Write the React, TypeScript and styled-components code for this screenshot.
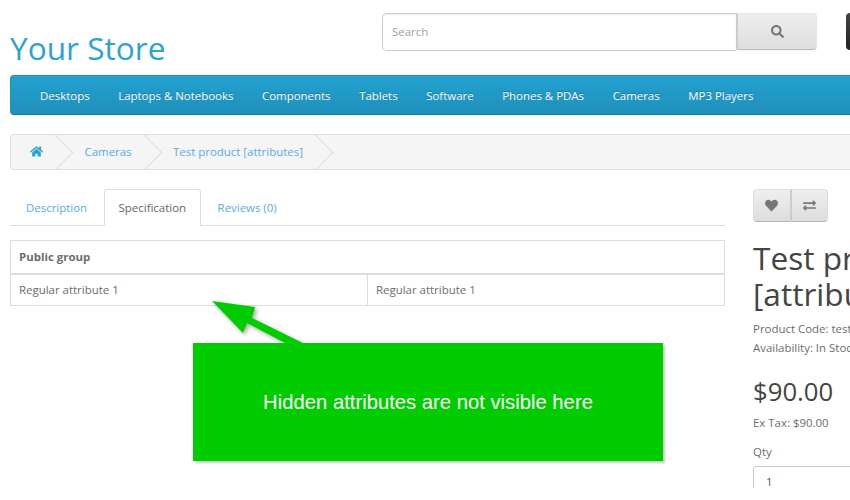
import React from "react";
import styled, { createGlobalStyle } from "styled-components";
import { FaHome, FaSearch, FaHeart, FaExchangeAlt, FaShoppingCart } from "react-icons/fa";

const Global = createGlobalStyle`
  html, body { margin: 0; padding: 0; background: #fff; overflow: hidden; }
  body { font-family: "Open Sans", sans-serif; font-size: 11.45px; line-height: 20px; color: #6c6c6c; }
  * { box-sizing: border-box; }
`;

const Viewport = styled.div`
  position: relative;
  width: 850px;
  height: 488px;
  overflow: hidden;
`;
const Page = styled.div`
  width: 1190px;
  padding: 0 10px;
`;
const Header = styled.header`
  display: flex;
  height: 75px;
`;
const Logo = styled.div`
  width: 372px;
  padding-top: 28px;
  font-size: 31.6px;
  line-height: 40px;
  color: #2aa3d3;
`;
const SearchGroup = styled.div`
  display: flex;
  width: 435px;
  height: 38px;
  margin-top: 13px;
`;
const SearchInput = styled.div`
  flex: 1;
  height: 38px;
  padding: 0 9px;
  border: 1px solid #ccc;
  border-right: 0;
  border-radius: 5px 0 0 5px;
  box-shadow: inset 0 1px 1px rgba(0, 0, 0, 0.075);
  line-height: 35px;
  color: #a0a0a0;
  background: #fff;
`;
const SearchButton = styled.div`
  display: flex;
  align-items: center;
  justify-content: center;
  width: 81px;
  height: 37px;
  border: 1px solid #e6e6e6;
  border-bottom-color: #bbb;
  border-left: 2px solid #ccc;
  border-radius: 0 4px 4px 0;
  background: linear-gradient(#eeeeee, #dddddd);
  box-shadow: 0 1px 2px rgba(0, 0, 0, 0.05);
  color: #777;
  font-size: 13px;
`;
const CartButton = styled.div`
  display: flex;
  align-items: center;
  gap: 8px;
  height: 37px;
  margin: 13px 0 0 29px;
  padding: 0 16px;
  border-radius: 4px;
  background: linear-gradient(#444, #222);
  color: #fff;
  white-space: nowrap;
`;
const Menu = styled.nav`
  display: flex;
  align-items: center;
  height: 40px;
  padding: 2px 0 0 19px;
  border: 1px solid #1f90bb;
  border-bottom-color: #1a7a9f;
  border-right: 0;
  border-radius: 4px;
  background: linear-gradient(#23a1d1, #1f90bb);
`;
const MenuItem = styled.a`
  padding: 0 10px;
  margin-right: 8.6px;
  color: #fff;
  text-shadow: 0 -1px 0 rgba(0, 0, 0, 0.25);
`;
const Crumbs = styled.ul`
  display: flex;
  height: 36px;
  margin: 19px 0 19px;
  padding: 0;
  list-style: none;
  border: 1px solid #ddd;
  border-radius: 4px;
  background: #f5f5f5;
  overflow: hidden;
`;
const Crumb = styled.li`
  position: relative;
  display: flex;
  align-items: center;
  margin-right: 1.5px;
  padding: 0 20px;
  white-space: nowrap;
  &:first-child {
    padding-left: 19px;
  }
  &::after {
    content: "";
    position: absolute;
    top: 4px;
    right: -5px;
    width: 26px;
    height: 26px;
    border-right: 1px solid #ddd;
    border-bottom: 1px solid #ddd;
    transform: rotate(-45deg);
  }
`;
const CrumbLink = styled.a`
  color: #55aedb;
`;
const HomeLink = styled.a`
  display: flex;
  color: #2a9fd4;
  font-size: 13px;
  margin-top: -2px;
`;
const Row = styled.div`
  display: flex;
  align-items: flex-start;
`;
const Main = styled.main`
  width: 715px;
  margin-right: 28px;
`;
const Tabs = styled.ul`
  display: flex;
  height: 37px;
  margin: 0 0 14px;
  padding: 0 0 0 1px;
  list-style: none;
  border-bottom: 1px solid #ddd;
`;
const Tab = styled.li<{ $active?: boolean }>`
  height: ${(p) => (p.$active ? "37px" : "36px")};
  margin-right: 1.5px;
  padding: 8px 14px 0;
  border: 1px solid ${(p) => (p.$active ? "#ddd" : "transparent")};
  border-bottom: ${(p) => (p.$active ? "0" : "1px solid transparent")};
  border-radius: 3px 3px 0 0;
  background: #fff;
  color: ${(p) => (p.$active ? "#666" : "#55aedb")};
`;
const SpecTable = styled.div`
  border: 1px solid #ddd;
`;
const SpecHead = styled.div`
  height: 34px;
  padding: 6px 8px 0;
  border-bottom: 2px solid #ddd;
  font-weight: 700;
`;
const SpecRow = styled.div`
  display: grid;
  grid-template-columns: 356px 1fr;
  height: 30px;
`;
const SpecCell = styled.div`
  padding: 5px 8px 0;
  & + & {
    border-left: 1px solid #ddd;
  }
`;
const Side = styled.aside`
  width: 330px;
  flex: none;
`;
const BtnGroup = styled.div`
  display: flex;
  width: 75px;
  height: 33px;
  margin-bottom: 18px;
`;
const IconBtn = styled.div`
  display: flex;
  align-items: center;
  justify-content: center;
  flex: 1;
  border: 1px solid #ddd;
  border-bottom-color: #b3b3b3;
  background: linear-gradient(#eeeeee, #dddddd);
  color: #777;
  font-size: 13px;
  &:first-child {
    border-right: 0;
    border-radius: 4px 0 0 4px;
  }
  &:last-child {
    border-left: 2px solid #ccc;
    border-radius: 0 4px 4px 0;
  }
`;
const Title = styled.h1`
  margin: 0 0 7px;
  font-size: 31.6px;
  font-weight: 400;
  line-height: 36px;
  color: #444;
`;
const InfoList = styled.ul`
  margin: 0 0 17px;
  padding: 0;
  list-style: none;
  line-height: 19px;
`;
const Price = styled.h2`
  margin: 0 0 3px;
  font-size: 25.7px;
  font-weight: 400;
  line-height: 36px;
  color: #444;
`;
const Tax = styled.div`
  margin-bottom: 9px;
`;
const Label = styled.div`
  margin-bottom: 4px;
`;
const QtyInput = styled.div`
  height: 34px;
  padding: 5px 12px;
  border: 1px solid #ccc;
  border-radius: 3px;
  color: #555;
`;
const Callout = styled.div`
  position: absolute;
  left: 193px;
  top: 343px;
  display: flex;
  align-items: center;
  justify-content: center;
  width: 470px;
  height: 118px;
  background: #00cc00;
  box-shadow: 2px 2px 2px rgba(0, 0, 0, 0.22);
  color: #fff;
  font-family: "Liberation Sans", Arial, sans-serif;
  font-size: 20.25px;
`;
const ArrowSvg = styled.svg`
  position: absolute;
  left: 200px;
  top: 295px;
  filter: drop-shadow(2px 2px 2px rgba(0, 0, 0, 0.35));
`;

const menu = ["Desktops", "Laptops & Notebooks", "Components", "Tablets", "Software", "Phones & PDAs", "Cameras", "MP3 Players"];

export default function App() {
  return (
    <Viewport>
      <Global />
      <Page>
        <Header>
          <Logo>Your Store</Logo>
          <SearchGroup>
            <SearchInput>Search</SearchInput>
            <SearchButton><FaSearch /></SearchButton>
          </SearchGroup>
          <CartButton><FaShoppingCart /> 0 item(s) - $0.00</CartButton>
        </Header>
        <Menu>
          {menu.map((m) => <MenuItem key={m}>{m}</MenuItem>)}
        </Menu>
        <Crumbs>
          <Crumb><HomeLink><FaHome /></HomeLink></Crumb>
          <Crumb><CrumbLink>Cameras</CrumbLink></Crumb>
          <Crumb><CrumbLink>Test product [attributes]</CrumbLink></Crumb>
        </Crumbs>
        <Row>
          <Main>
            <Tabs>
              <Tab>Description</Tab>
              <Tab $active>Specification</Tab>
              <Tab>Reviews (0)</Tab>
            </Tabs>
            <SpecTable>
              <SpecHead>Public group</SpecHead>
              <SpecRow>
                <SpecCell>Regular attribute 1</SpecCell>
                <SpecCell>Regular attribute 1</SpecCell>
              </SpecRow>
            </SpecTable>
          </Main>
          <Side>
            <BtnGroup>
              <IconBtn><FaHeart /></IconBtn>
              <IconBtn><FaExchangeAlt /></IconBtn>
            </BtnGroup>
            <Title>Test product [attributes]</Title>
            <InfoList>
              <li>Product Code: test</li>
              <li>Availability: In Stock</li>
            </InfoList>
            <Price>$90.00</Price>
            <Tax>Ex Tax: $90.00</Tax>
            <Label>Qty</Label>
            <QtyInput>1</QtyInput>
          </Side>
        </Row>
      </Page>
      <ArrowSvg width="120" height="60" viewBox="200 295 120 60">
        <polygon points="212,301 255,307 252,318 305,344 287,344 247,323 243,333" fill="#00cc00" />
      </ArrowSvg>
      <Callout>Hidden attributes are not visible here</Callout>
    </Viewport>
  );
}
